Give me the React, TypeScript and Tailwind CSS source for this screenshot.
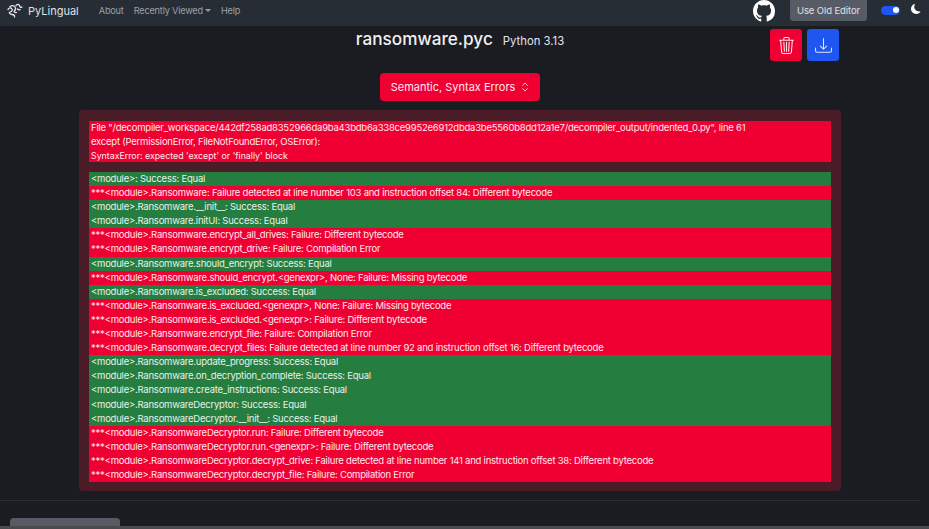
import { BsGithub, BsDownload, BsMoonFill, BsTrash3 } from "react-icons/bs";

const rows: [string, boolean][] = [
  ["<module>: Success: Equal", true],
  ["***<module>.Ransomware: Failure detected at line number 103 and instruction offset 84: Different bytecode", false],
  ["<module>.Ransomware.__init__: Success: Equal", true],
  ["<module>.Ransomware.initUI: Success: Equal", true],
  ["***<module>.Ransomware.encrypt_all_drives: Failure: Different bytecode", false],
  ["***<module>.Ransomware.encrypt_drive: Failure: Compilation Error", false],
  ["<module>.Ransomware.should_encrypt: Success: Equal", true],
  ["***<module>.Ransomware.should_encrypt.<genexpr>, None: Failure: Missing bytecode", false],
  ["<module>.Ransomware.is_excluded: Success: Equal", true],
  ["***<module>.Ransomware.is_excluded.<genexpr>, None: Failure: Missing bytecode", false],
  ["***<module>.Ransomware.is_excluded.<genexpr>: Failure: Different bytecode", false],
  ["***<module>.Ransomware.encrypt_file: Failure: Compilation Error", false],
  ["***<module>.Ransomware.decrypt_files: Failure detected at line number 92 and instruction offset 16: Different bytecode", false],
  ["<module>.Ransomware.update_progress: Success: Equal", true],
  ["<module>.Ransomware.on_decryption_complete: Success: Equal", true],
  ["<module>.Ransomware.create_instructions: Success: Equal", true],
  ["<module>.RansomwareDecryptor: Success: Equal", true],
  ["<module>.RansomwareDecryptor.__init__: Success: Equal", true],
  ["***<module>.RansomwareDecryptor.run: Failure: Different bytecode", false],
  ["***<module>.RansomwareDecryptor.run.<genexpr>: Failure: Different bytecode", false],
  ["***<module>.RansomwareDecryptor.decrypt_drive: Failure detected at line number 141 and instruction offset 38: Different bytecode", false],
  ["***<module>.RansomwareDecryptor.decrypt_file: Failure: Compilation Error", false],
];

function Logo() {
  return (
    <svg width="16" height="16" viewBox="0 0 16 16" fill="none" stroke="#e5e7eb" strokeWidth="1.3" strokeLinecap="round" className="mb-[4px]">
      <path d="M1 6.5c1.5-2 3-2 4-.5s-.5 2.5-2 3 0 2.5 2 2.5 3 1 2.5 2.5" />
      <path d="M3 3.5C5 2 7 2.5 8 4s.5 3-.5 4 .5 2 2 1.5" />
      <path d="M9 2.5c1.500-1.500 3-1.500 3.500 0s1 2.500 2.500 1.500" />
      <path d="M10.500 6c1 1 2 1 2.500.5" />
    </svg>
  );
}

export default function App() {
  return (
    <div className="flex h-[529px] w-[929px] flex-col overflow-hidden bg-[#1b1c22] font-['Inter',sans-serif] text-white">
      <nav className="flex h-[26px] shrink-0 items-center bg-[#272d35] pl-[7px] pr-[8px]">
        <Logo />
        <span className="mb-[4px] ml-[5px] text-[11px] leading-none text-[#dfe2e6]">PyLingual</span>
        <div className="mb-[4px] ml-[20px] flex items-center gap-[10px] text-[9.2px] leading-none tracking-[-0.2px] text-[#9aa0a8]">
          <span>About</span>
          <span className="flex items-center gap-[2px]">
            Recently Viewed
            <span className="h-0 w-0 border-x-[3px] border-t-[3px] border-x-transparent border-t-[#9aa0a8]" />
          </span>
          <span>Help</span>
        </div>
        <BsGithub className="ml-auto mb-[5px] mr-[15px] text-[22px] text-white" />
        <div className="flex h-[21px] w-[77px] items-center justify-center self-start rounded-b-[3px] bg-[#565b66] text-[9.5px] leading-none tracking-[-0.1px] text-[#e0e2e6]">
          Use Old Editor
        </div>
        <div className="ml-[14px] mb-[6px] flex h-[9px] w-[19px] items-center justify-end rounded-full bg-[#1f55f0] pr-[1px]">
          <span className="h-[6px] w-[6px] rounded-full bg-white" />
        </div>
        <BsMoonFill className="ml-[11px] mb-[8px] text-[10px] text-white" />
      </nav>

      <div className="flex w-[920px] shrink-0 flex-col items-center">
        <div className="relative h-[47px] w-full">
          <div className="mt-[1px] flex items-baseline justify-center gap-[10px]">
            <span className="text-[17.2px] font-medium leading-[24px] text-[#eef0f2]">ransomware.pyc</span>
            <span className="text-[11.3px] leading-none text-[#e2e4e7]">Python 3.13</span>
          </div>
          <div className="absolute left-[770px] top-[3px] flex gap-[5px]">
            <div className="flex h-[32px] w-[32px] items-center justify-center rounded-[3px] bg-[#f00032]">
              <BsTrash3 className="text-[17px] text-[#ffe4ea]" />
            </div>
            <div className="flex h-[32px] w-[32px] items-center justify-center rounded-[3px] bg-[#1f55f0]">
              <BsDownload className="text-[17px] text-[#dbe5ff]" />
            </div>
          </div>
        </div>

        <div className="flex h-[28px] w-[160px] items-center justify-center gap-[6px] rounded-[4px] bg-[#f00032] text-[11px] leading-none text-[#ffe9ee]">
          Semantic, Syntax Errors
          <svg width="8" height="10" viewBox="0 0 9 11" fill="none" stroke="#ffe9ee" strokeWidth="0.9">
            <path d="M1.500 4 4.500 1l3 3M1.500 7l3 3 3-3" />
          </svg>
        </div>

        <div className="mt-[9px] flex h-[381px] w-[762px] flex-col rounded-[4px] bg-[#4a1c27] px-[10px] pt-[11px]">
          <div className="flex h-[41px] flex-col justify-center bg-[#f00032] pl-[2px] text-[9.5px] leading-[14px] tracking-[-0.23px] text-[#ffe9ee]">
            <div className="whitespace-nowrap">File "/decompiler_workspace/442df258ad8352966da9ba43bdb6a338ce9952e6912dbda3be5560b8dd12a1e7/decompiler_output/indented_0.py", line 61</div>
            <div>except (PermissionError, FileNotFoundError, OSError):</div>
            <div className="text-[8.8px] tracking-normal">SyntaxError: expected 'except' or 'finally' block</div>
          </div>
          <div className="mt-[10px] flex flex-col">
            {rows.map(([text, ok], i) => (
              <div
                key={i}
                className={`h-[14.1px] whitespace-nowrap pl-[2px] text-[9.5px] leading-[13px] tracking-[-0.23px] ${ok ? "bg-[#267d40] text-[#e6f2ea]" : "bg-[#f00032] text-[#ffe9ee]"}`}
              >
                {text}
              </div>
            ))}
          </div>
        </div>

        <div className="mt-[9px] h-[1px] w-full bg-[#2b2f34]" />
      </div>

      <div className="mt-[17px] ml-[10px] h-[8px] w-[110px] shrink-0 rounded-t-[4px] bg-[#565b66]" />
      <div className="h-[3px] w-full shrink-0 bg-[#4a4b4e]" />
    </div>
  );
}
